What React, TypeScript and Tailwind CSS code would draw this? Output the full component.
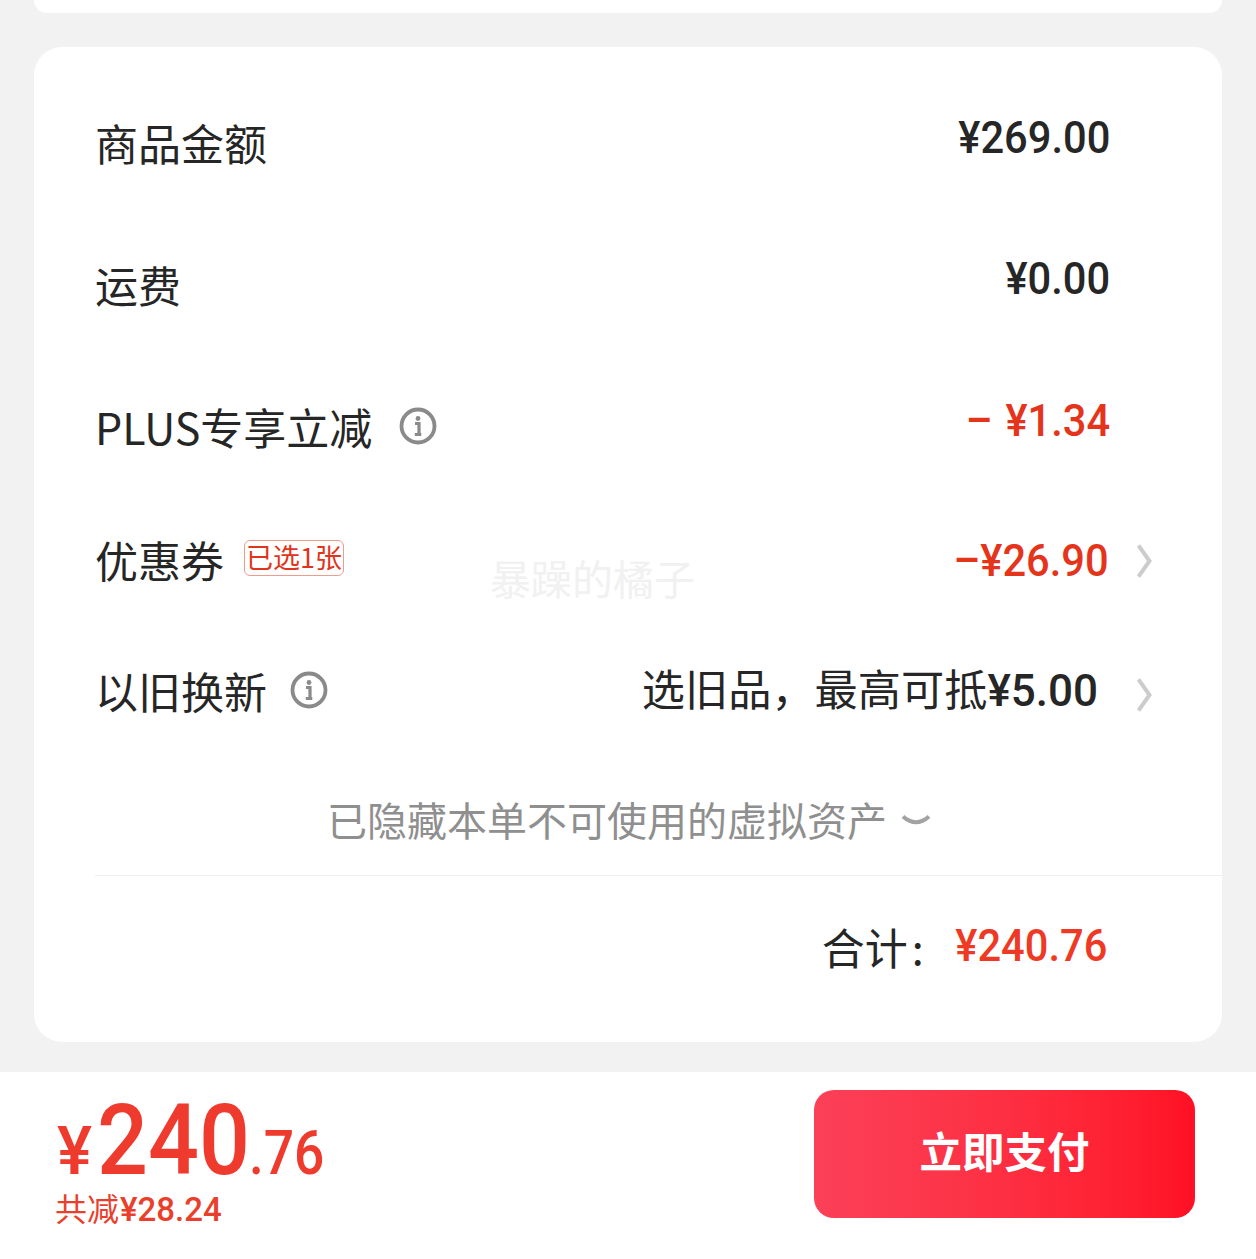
const cjk = "font-['Noto_Sans_CJK_SC','Noto_Sans',sans-serif]";
const num = "font-['Roboto','Noto_Sans_CJK_SC',sans-serif]";
const label = "text-[43px] leading-[74px] h-[74px] block";
const amount = `${num} font-medium text-[45px] leading-[50px] h-[50px] inline-block whitespace-nowrap scale-x-[0.925] origin-right`;

function InfoIcon() {
  return (
    <svg width="38" height="38" viewBox="0 0 38 38" fill="none" className="shrink-0">
      <circle cx="19" cy="19" r="16.5" stroke="#8a8a8a" strokeWidth="3.8" />
      <circle cx="19" cy="11.5" r="2.4" fill="#8a8a8a" />
      <path d="M16 16.5h4v11M15.8 27.5h6.5" stroke="#8a8a8a" strokeWidth="3.2" />
    </svg>
  );
}

function Chevron() {
  return (
    <svg width="15" height="34" viewBox="0 0 15 34" fill="none" className="shrink-0">
      <path d="M1.5 1.5 12.5 17 1.5 32.5" stroke="#cccccc" strokeWidth="4" />
    </svg>
  );
}

export default function App() {
  return (
    <div className={`${cjk} w-[1256px] h-[1259px] bg-[#f2f2f2] flex flex-col overflow-hidden text-[#262626]`}>
      <div className="mx-[34px] h-[13px] bg-white rounded-b-[28px]" />

      {/* Order summary card */}
      <div className="relative mt-[34px] mx-[34px] h-[995px] bg-white rounded-[28px] flex flex-col">
        <div className="flex justify-between items-start pl-[61px] pr-[112px] h-[141px]">
          <span className={`${label} mt-[58px]`}>商品金额</span>
          <span className={`${amount} mt-[66px]`}>¥269.00</span>
        </div>
        <div className="flex justify-between items-start pl-[61px] pr-[112px] h-[141px]">
          <span className={`${label} mt-[59px]`}>运费</span>
          <span className={`${amount} mt-[66px]`}>¥0.00</span>
        </div>
        <div className="flex justify-between items-start pl-[61px] pr-[112px] h-[134px]">
          <span className="flex items-center gap-[27px] h-[74px] mt-[60px]">
            <span className={label}>PLUS专享立减</span>
            <InfoIcon />
          </span>
          <span className={`${amount} mt-[67px] text-[#e5341c]`}>
            <span className="mr-[14px]">–</span>¥1.34
          </span>
        </div>
        <div className="flex justify-between items-start pl-[61px] pr-[70px] h-[131px]">
          <span className="flex items-center gap-[20px] h-[74px] mt-[59px]">
            <span className={label}>优惠券</span>
            <span className="h-[36px] w-[100px] mb-[2px] border border-[#ec9e8e] rounded-[6px] text-[#e0341c] text-[27px] leading-[32px] text-center whitespace-nowrap">已选1张</span>
          </span>
          <span className="flex items-center gap-[28px] h-[50px] mt-[73px]">
            <span className={`${amount} text-[#e5341c]`}>–¥26.90</span>
            <Chevron />
          </span>
        </div>
        <div className="flex justify-between items-start pl-[61px] pr-[70px] h-[129px]">
          <span className="flex items-center gap-[23px] h-[74px] mt-[59px]">
            <span className={label}>以旧换新</span>
            <InfoIcon />
          </span>
          <span className="flex items-center gap-[39px] h-[60px] mt-[71px]">
            <span className="text-[43.2px] leading-[60px] whitespace-nowrap -mt-[12px]">
              选旧品，最高可抵<span className={`${num} font-medium text-[44px]`}>¥5.00</span>
            </span>
            <Chevron />
          </span>
        </div>
        <div className="flex items-center justify-center gap-[14px] pl-[2px] mt-[61px] h-[70px] text-[40px] leading-[70px] text-[#8f8f8f]">
          <span>已隐藏本单不可使用的虚拟资产</span>
          <svg width="30" height="16" viewBox="0 0 30 16" fill="none" className="mt-[4px]">
            <path d="M2 3.5Q15 15 28 3.5" stroke="#a3a3a3" strokeWidth="4" />
          </svg>
        </div>
        <div className="ml-[61px] mt-[21px] h-[1px] bg-[#eeeeee]" />
        <div className="flex items-center justify-end gap-[19px] pr-[115px] h-[140px]">
          <span className="text-[43px] whitespace-nowrap">合计<span className="ml-[4px]">:</span></span>
          <span className={`${amount} text-[#ee3a24]`}>¥240.76</span>
        </div>

        {/* Watermark */}
        <span className="absolute left-[456px] top-[500px] text-[41px] leading-[60px] text-[#f1f1f1]">暴躁的橘子</span>
      </div>

      {/* Pay bar */}
      <div className="mt-[30px] flex-1 bg-white flex justify-between pl-[55px] pr-[61px]">
        <div className="flex flex-col text-[#ef3a2e]">
          <div className={`${num} font-medium flex items-baseline h-[94px] leading-[94px] mt-[22px] whitespace-nowrap`}>
            <span className="text-[66px] ml-[2px] w-[40px]">¥</span>
            <span className="text-[98px] w-[152px] inline-block scale-x-[0.915] origin-left">240</span>
            <span className="text-[62px] w-[73px] inline-block scale-x-[0.86] origin-left">.76</span>
          </div>
          <div className="text-[32px] leading-[36px] text-[#e9402c] whitespace-nowrap mt-[1px]">
            共减<span className={`${num} font-medium text-[33px] ml-[1px]`}>¥28.24</span>
          </div>
        </div>
        <div className="mt-[18px] w-[381px] h-[128px] pb-[8px] rounded-[20px] bg-gradient-to-r from-[#fb4058] to-[#ff1024] text-white font-bold text-[42.5px] flex items-center justify-center">
          立即支付
        </div>
      </div>
    </div>
  );
}
